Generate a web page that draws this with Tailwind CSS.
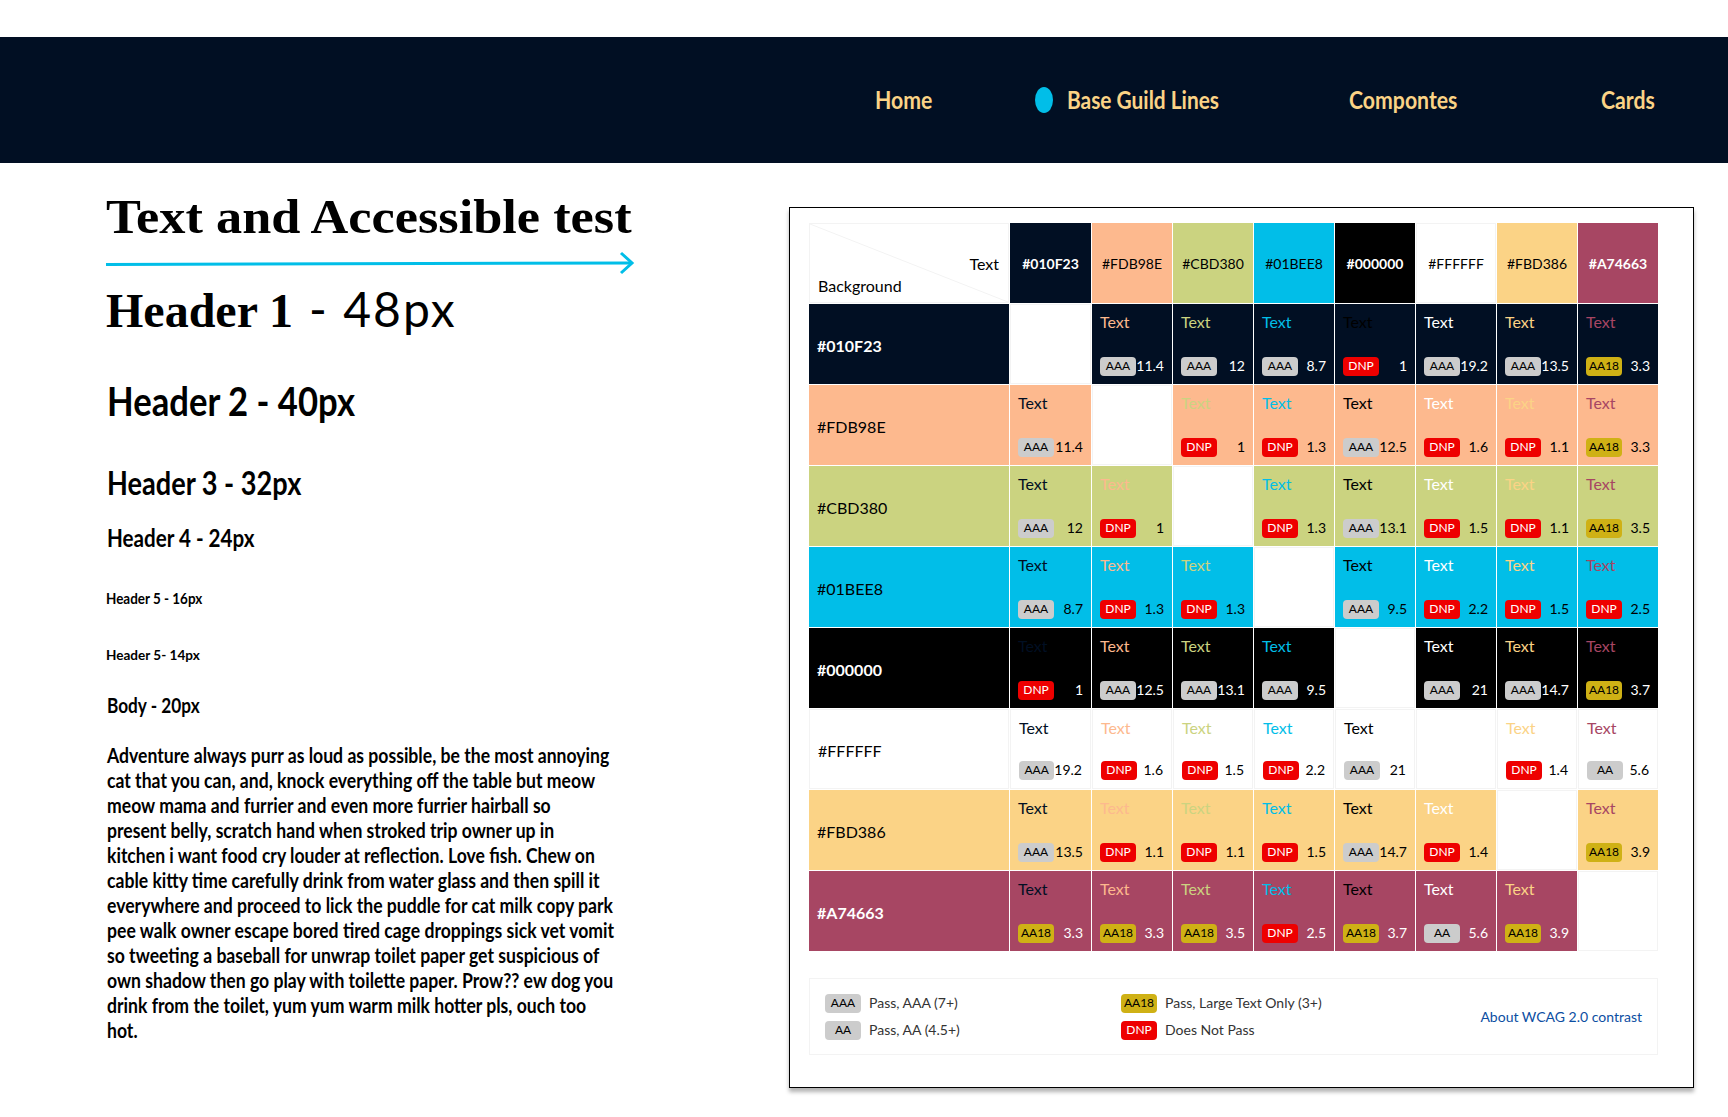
<!DOCTYPE html>
<html>
<head>
<meta charset="utf-8">
<script src="https://cdn.jsdelivr.net/npm/@tailwindcss/browser@4"></script>
<title>Text and Accessible test</title>
</head>
<body class="bg-white font-['Lato',sans-serif] text-black overflow-hidden">
<div class="w-[1728px] h-[1117px] flex flex-col">
  <div class="h-[37px] shrink-0"></div>
  <nav class="h-[126px] shrink-0 bg-[#010F23] flex items-center pl-[875px] font-bold text-2xl text-[#FBD386]">
    <a class="w-[160px] block"><span class="block scale-x-[0.885] origin-left whitespace-nowrap">Home</span></a>
    <a class="w-[314px] flex items-center gap-[14px]"><i class="block w-[18px] h-[26px] rounded-[50%] bg-[#01BEE8]"></i><span class="block scale-x-[0.87] origin-left whitespace-nowrap">Base Guild Lines</span></a>
    <a class="w-[252px] block"><span class="block scale-x-[0.885] origin-left whitespace-nowrap">Compontes</span></a>
    <a class="block"><span class="block scale-x-[0.885] origin-left whitespace-nowrap">Cards</span></a>
  </nav>
  <main class="flex-1 flex relative">
    <section class="w-[789px] shrink-0 pl-[106px] pt-[30px]">
      <h1 class="font-['Liberation_Serif',serif] font-bold text-[48px] leading-[48px] whitespace-nowrap scale-x-[1.09] origin-left">Text and Accessible test</h1>
      <svg class="block mt-[10px] -ml-px" width="532" height="24" viewBox="0 0 532 24" fill="none" stroke="#01BEE8" stroke-width="3"><path d="M1 13.5 L526 12"/><path d="M516 2 L527 12 L516 22"/></svg>
      <h2 class="font-['Liberation_Serif',serif] font-bold text-[48px] leading-[56px] mt-[6px] whitespace-nowrap">Header 1 <span class="font-['Lato',sans-serif] font-normal text-[48px] tracking-[2px] ml-[4px]">- 48px</span></h2>
      <h2 class="font-bold text-[40px] leading-[48px] mt-[38px] ml-[1px] whitespace-nowrap scale-x-[0.866] origin-left">Header 2 - 40px</h2>
      <h3 class="font-bold text-[32px] leading-[40px] mt-[38px] ml-[1px] whitespace-nowrap scale-x-[0.848] origin-left">Header 3 - 32px</h3>
      <h4 class="font-bold text-2xl leading-[30px] mt-[20px] ml-[1px] whitespace-nowrap scale-x-[0.858] origin-left">Header 4 - 24px</h4>
      <h5 class="font-bold text-base leading-5 mt-[35px] whitespace-nowrap scale-x-[0.84] origin-left">Header 5 - 16px</h5>
      <h6 class="font-bold text-sm leading-5 mt-[37px] whitespace-nowrap scale-x-[0.968] origin-left">Header 5- 14px</h6>
      <p class="font-bold text-xl leading-[25px] mt-[28px] ml-[1px] whitespace-nowrap scale-x-[0.86] origin-left">Body - 20px</p>
      <p class="font-bold text-xl leading-[25px] mt-[25px] ml-[1px] whitespace-nowrap scale-x-[0.88] origin-left">Adventure always purr as loud as possible, be the most annoying<br>cat that you can, and, knock everything off the table but meow<br>meow mama and furrier and even more furrier hairball so<br>present belly, scratch hand when stroked trip owner up in<br>kitchen i want food cry louder at reflection. Love fish. Chew on<br>cable kitty time carefully drink from water glass and then spill it<br>everywhere and proceed to lick the puddle for cat milk copy park<br>pee walk owner escape bored tired cage droppings sick vet vomit<br>so tweeting a baseball for unwrap toilet paper get suspicious of<br>own shadow then go play with toilette paper. Prow?? ew dog you<br>drink from the toilet, yum yum warm milk hotter pls, ouch too<br>hot.</p>
    </section>
    <section class="mt-[44px] w-[905px] h-[881px] border border-black bg-white shadow-[0_4px_4px_rgba(0,0,0,0.3)] pt-[15px] pl-[19px] shrink-0">
      <div class="grid grid-cols-[200px_81px_repeat(7,80px)] auto-rows-[80px] gap-px
        [&_b]:flex [&_b]:w-9 [&_b]:h-[19px] [&_b]:rounded-[4px] [&_b]:items-center [&_b]:justify-center [&_b]:text-xs [&_b]:font-normal
        [&_.c]:flex [&_.c]:flex-col [&_.c]:justify-between [&_.c]:pt-[6px] [&_.c]:pb-2 [&_.c]:px-2 [&_.c]:text-base
        [&_.r]:flex [&_.r]:justify-between [&_.r]:items-center [&_.r]:text-sm
        [&_.h]:flex [&_.h]:items-center [&_.h]:justify-center [&_.h]:text-sm [&_.h]:pt-[2px]
        [&_.l]:flex [&_.l]:items-center [&_.l]:pl-2 [&_.l]:pt-[3px] [&_.l]:text-base">
        <div class="relative border border-[#f3f3f3] bg-white overflow-hidden">
          <svg class="absolute inset-0" width="198" height="78" fill="none" stroke="#f3f3f3"><path d="M0 0 L198 78"/></svg>
          <span class="absolute right-[9px] top-[28px] text-base">Text</span>
          <span class="absolute left-2 top-[50px] text-base">Background</span>
        </div>
        <div class="h bg-[#010F23] text-white font-bold">#010F23</div><div class="h bg-[#FDB98E]">#FDB98E</div><div class="h bg-[#CBD380]">#CBD380</div><div class="h bg-[#01BEE8]">#01BEE8</div><div class="h bg-black text-white font-bold">#000000</div><div class="h bg-white border border-[#f3f3f3]">#FFFFFF</div><div class="h bg-[#FBD386]">#FBD386</div><div class="h bg-[#A74663] text-white font-bold">#A74663</div>

        <div class="contents text-white [&>div]:bg-[#010F23]">
          <div class="l font-bold">#010F23</div>
          <div class="!bg-white border border-[#f3f3f3]"></div>
          <div class="c"><span class="text-[#FDB98E]">Text</span><div class="r"><b class="bg-[#cccccc] text-black">AAA</b><span>11.4</span></div></div>
          <div class="c"><span class="text-[#CBD380]">Text</span><div class="r"><b class="bg-[#cccccc] text-black">AAA</b><span>12</span></div></div>
          <div class="c"><span class="text-[#01BEE8]">Text</span><div class="r"><b class="bg-[#cccccc] text-black">AAA</b><span>8.7</span></div></div>
          <div class="c"><span class="text-black">Text</span><div class="r"><b class="bg-[#ee0000] text-white">DNP</b><span>1</span></div></div>
          <div class="c"><span class="text-white">Text</span><div class="r"><b class="bg-[#cccccc] text-black">AAA</b><span>19.2</span></div></div>
          <div class="c"><span class="text-[#FBD386]">Text</span><div class="r"><b class="bg-[#cccccc] text-black">AAA</b><span>13.5</span></div></div>
          <div class="c"><span class="text-[#A74663]">Text</span><div class="r"><b class="bg-[#cfb115] text-black">AA18</b><span>3.3</span></div></div>
        </div>

        <div class="contents text-black [&>div]:bg-[#FDB98E]">
          <div class="l">#FDB98E</div>
          <div class="c"><span class="text-[#010F23]">Text</span><div class="r"><b class="bg-[#cccccc] text-black">AAA</b><span>11.4</span></div></div>
          <div class="!bg-white border border-[#f3f3f3]"></div>
          <div class="c"><span class="text-[#CBD380]">Text</span><div class="r"><b class="bg-[#ee0000] text-white">DNP</b><span>1</span></div></div>
          <div class="c"><span class="text-[#01BEE8]">Text</span><div class="r"><b class="bg-[#ee0000] text-white">DNP</b><span>1.3</span></div></div>
          <div class="c"><span class="text-black">Text</span><div class="r"><b class="bg-[#cccccc] text-black">AAA</b><span>12.5</span></div></div>
          <div class="c"><span class="text-white">Text</span><div class="r"><b class="bg-[#ee0000] text-white">DNP</b><span>1.6</span></div></div>
          <div class="c"><span class="text-[#FBD386]">Text</span><div class="r"><b class="bg-[#ee0000] text-white">DNP</b><span>1.1</span></div></div>
          <div class="c"><span class="text-[#A74663]">Text</span><div class="r"><b class="bg-[#cfb115] text-black">AA18</b><span>3.3</span></div></div>
        </div>

        <div class="contents text-black [&>div]:bg-[#CBD380]">
          <div class="l">#CBD380</div>
          <div class="c"><span class="text-[#010F23]">Text</span><div class="r"><b class="bg-[#cccccc] text-black">AAA</b><span>12</span></div></div>
          <div class="c"><span class="text-[#FDB98E]">Text</span><div class="r"><b class="bg-[#ee0000] text-white">DNP</b><span>1</span></div></div>
          <div class="!bg-white border border-[#f3f3f3]"></div>
          <div class="c"><span class="text-[#01BEE8]">Text</span><div class="r"><b class="bg-[#ee0000] text-white">DNP</b><span>1.3</span></div></div>
          <div class="c"><span class="text-black">Text</span><div class="r"><b class="bg-[#cccccc] text-black">AAA</b><span>13.1</span></div></div>
          <div class="c"><span class="text-white">Text</span><div class="r"><b class="bg-[#ee0000] text-white">DNP</b><span>1.5</span></div></div>
          <div class="c"><span class="text-[#FBD386]">Text</span><div class="r"><b class="bg-[#ee0000] text-white">DNP</b><span>1.1</span></div></div>
          <div class="c"><span class="text-[#A74663]">Text</span><div class="r"><b class="bg-[#cfb115] text-black">AA18</b><span>3.5</span></div></div>
        </div>

        <div class="contents text-black [&>div]:bg-[#01BEE8]">
          <div class="l">#01BEE8</div>
          <div class="c"><span class="text-[#010F23]">Text</span><div class="r"><b class="bg-[#cccccc] text-black">AAA</b><span>8.7</span></div></div>
          <div class="c"><span class="text-[#FDB98E]">Text</span><div class="r"><b class="bg-[#ee0000] text-white">DNP</b><span>1.3</span></div></div>
          <div class="c"><span class="text-[#CBD380]">Text</span><div class="r"><b class="bg-[#ee0000] text-white">DNP</b><span>1.3</span></div></div>
          <div class="!bg-white border border-[#f3f3f3]"></div>
          <div class="c"><span class="text-black">Text</span><div class="r"><b class="bg-[#cccccc] text-black">AAA</b><span>9.5</span></div></div>
          <div class="c"><span class="text-white">Text</span><div class="r"><b class="bg-[#ee0000] text-white">DNP</b><span>2.2</span></div></div>
          <div class="c"><span class="text-[#FBD386]">Text</span><div class="r"><b class="bg-[#ee0000] text-white">DNP</b><span>1.5</span></div></div>
          <div class="c"><span class="text-[#A74663]">Text</span><div class="r"><b class="bg-[#ee0000] text-white">DNP</b><span>2.5</span></div></div>
        </div>

        <div class="contents text-white [&>div]:bg-black">
          <div class="l font-bold">#000000</div>
          <div class="c"><span class="text-[#010F23]">Text</span><div class="r"><b class="bg-[#ee0000] text-white">DNP</b><span>1</span></div></div>
          <div class="c"><span class="text-[#FDB98E]">Text</span><div class="r"><b class="bg-[#cccccc] text-black">AAA</b><span>12.5</span></div></div>
          <div class="c"><span class="text-[#CBD380]">Text</span><div class="r"><b class="bg-[#cccccc] text-black">AAA</b><span>13.1</span></div></div>
          <div class="c"><span class="text-[#01BEE8]">Text</span><div class="r"><b class="bg-[#cccccc] text-black">AAA</b><span>9.5</span></div></div>
          <div class="!bg-white border border-[#f3f3f3]"></div>
          <div class="c"><span class="text-white">Text</span><div class="r"><b class="bg-[#cccccc] text-black">AAA</b><span>21</span></div></div>
          <div class="c"><span class="text-[#FBD386]">Text</span><div class="r"><b class="bg-[#cccccc] text-black">AAA</b><span>14.7</span></div></div>
          <div class="c"><span class="text-[#A74663]">Text</span><div class="r"><b class="bg-[#cfb115] text-black">AA18</b><span>3.7</span></div></div>
        </div>

        <div class="contents text-black [&>div]:bg-white [&>div]:border [&>div]:border-[#f3f3f3]">
          <div class="l">#FFFFFF</div>
          <div class="c"><span class="text-[#010F23]">Text</span><div class="r"><b class="bg-[#cccccc] text-black">AAA</b><span>19.2</span></div></div>
          <div class="c"><span class="text-[#FDB98E]">Text</span><div class="r"><b class="bg-[#ee0000] text-white">DNP</b><span>1.6</span></div></div>
          <div class="c"><span class="text-[#CBD380]">Text</span><div class="r"><b class="bg-[#ee0000] text-white">DNP</b><span>1.5</span></div></div>
          <div class="c"><span class="text-[#01BEE8]">Text</span><div class="r"><b class="bg-[#ee0000] text-white">DNP</b><span>2.2</span></div></div>
          <div class="c"><span class="text-black">Text</span><div class="r"><b class="bg-[#cccccc] text-black">AAA</b><span>21</span></div></div>
          <div></div>
          <div class="c"><span class="text-[#FBD386]">Text</span><div class="r"><b class="bg-[#ee0000] text-white">DNP</b><span>1.4</span></div></div>
          <div class="c"><span class="text-[#A74663]">Text</span><div class="r"><b class="bg-[#cccccc] text-black">AA</b><span>5.6</span></div></div>
        </div>

        <div class="contents text-black [&>div]:bg-[#FBD386]">
          <div class="l">#FBD386</div>
          <div class="c"><span class="text-[#010F23]">Text</span><div class="r"><b class="bg-[#cccccc] text-black">AAA</b><span>13.5</span></div></div>
          <div class="c"><span class="text-[#FDB98E]">Text</span><div class="r"><b class="bg-[#ee0000] text-white">DNP</b><span>1.1</span></div></div>
          <div class="c"><span class="text-[#CBD380]">Text</span><div class="r"><b class="bg-[#ee0000] text-white">DNP</b><span>1.1</span></div></div>
          <div class="c"><span class="text-[#01BEE8]">Text</span><div class="r"><b class="bg-[#ee0000] text-white">DNP</b><span>1.5</span></div></div>
          <div class="c"><span class="text-black">Text</span><div class="r"><b class="bg-[#cccccc] text-black">AAA</b><span>14.7</span></div></div>
          <div class="c"><span class="text-white">Text</span><div class="r"><b class="bg-[#ee0000] text-white">DNP</b><span>1.4</span></div></div>
          <div class="!bg-white border border-[#f3f3f3]"></div>
          <div class="c"><span class="text-[#A74663]">Text</span><div class="r"><b class="bg-[#cfb115] text-black">AA18</b><span>3.9</span></div></div>
        </div>

        <div class="contents text-white [&>div]:bg-[#A74663]">
          <div class="l font-bold">#A74663</div>
          <div class="c"><span class="text-[#010F23]">Text</span><div class="r"><b class="bg-[#cfb115] text-black">AA18</b><span>3.3</span></div></div>
          <div class="c"><span class="text-[#FDB98E]">Text</span><div class="r"><b class="bg-[#cfb115] text-black">AA18</b><span>3.3</span></div></div>
          <div class="c"><span class="text-[#CBD380]">Text</span><div class="r"><b class="bg-[#cfb115] text-black">AA18</b><span>3.5</span></div></div>
          <div class="c"><span class="text-[#01BEE8]">Text</span><div class="r"><b class="bg-[#ee0000] text-white">DNP</b><span>2.5</span></div></div>
          <div class="c"><span class="text-black">Text</span><div class="r"><b class="bg-[#cfb115] text-black">AA18</b><span>3.7</span></div></div>
          <div class="c"><span class="text-white">Text</span><div class="r"><b class="bg-[#cccccc] text-black">AA</b><span>5.6</span></div></div>
          <div class="c"><span class="text-[#FBD386]">Text</span><div class="r"><b class="bg-[#cfb115] text-black">AA18</b><span>3.9</span></div></div>
          <div class="!bg-white border border-[#f3f3f3]"></div>
        </div>
      </div>

      <div class="mt-[27px] w-[849px] h-[77px] border border-[#f3f3f3] flex items-center pl-[15px] pr-[15px] text-sm text-[#333333]">
        <div class="w-[296px] grid gap-2 auto-rows-[19px]">
          <div class="flex items-center gap-2"><span class="w-9 h-[19px] rounded-[4px] bg-[#cccccc] text-black text-xs flex items-center justify-center">AAA</span>Pass, AAA (7+)</div>
          <div class="flex items-center gap-2"><span class="w-9 h-[19px] rounded-[4px] bg-[#cccccc] text-black text-xs flex items-center justify-center">AA</span>Pass, AA (4.5+)</div>
        </div>
        <div class="grid gap-2 auto-rows-[19px]">
          <div class="flex items-center gap-2"><span class="w-9 h-[19px] rounded-[4px] bg-[#cfb115] text-black text-xs flex items-center justify-center">AA18</span>Pass, Large Text Only (3+)</div>
          <div class="flex items-center gap-2"><span class="w-9 h-[19px] rounded-[4px] bg-[#ee0000] text-white text-xs flex items-center justify-center">DNP</span>Does Not Pass</div>
        </div>
        <a class="ml-auto text-[#0b4ea2]">About WCAG 2.0 contrast</a>
      </div>
    </section>
  </main>
</div>
</body>
</html>
